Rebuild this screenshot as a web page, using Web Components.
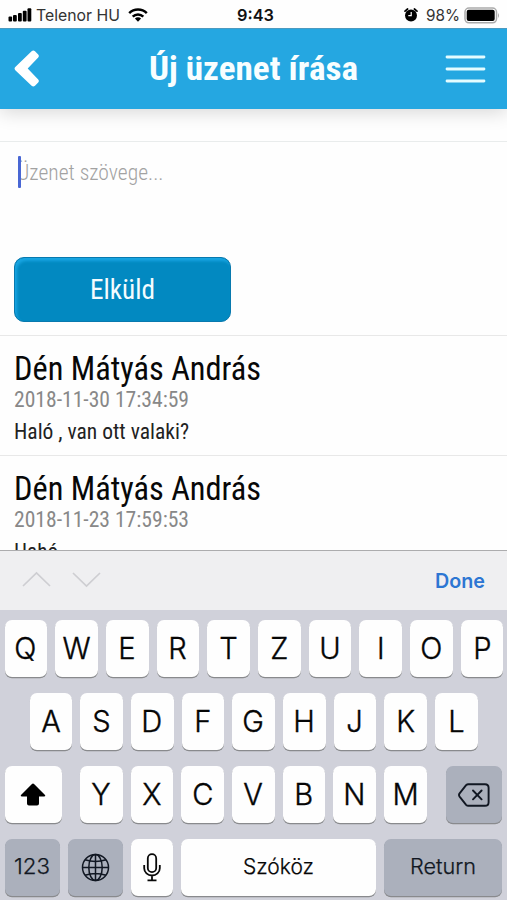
<!DOCTYPE html>
<html lang="hu">
<head>
<meta charset="utf-8">
<title>Új üzenet írása</title>
<style>
    body {
        margin: 0;
        width: 507px;
        height: 900px;
        overflow: hidden;
        background: #fefefe;
        font-family: Inter, "Liberation Sans", sans-serif;
    }
</style>
</head>
<body>
<phone-screen></phone-screen>

<script>
    // One line of text squeezed or stretched to the given width
    class FitText extends HTMLElement {
        constructor() {
            super();
            this.attachShadow({ mode: 'open' }).innerHTML = `
                <style>
                    :host { display: block; flex: none; }
                    span { display: inline-block; vertical-align: top; white-space: nowrap; transform-origin: 0 50%; }
                </style>
                <span><slot></slot></span>`;
        }
        connectedCallback() {
            const span = this.shadowRoot.querySelector('span');
            const width = parseFloat(this.getAttribute('width'));
            this.style.width = width + 'px';
            const natural = span.getBoundingClientRect().width;
            if (natural) span.style.transform = 'scaleX(' + width / natural + ')';
        }
    }

    class StatusBar extends HTMLElement {
        constructor() {
            super();
            this.attachShadow({ mode: 'open' }).innerHTML = `
                <style>
                    :host { display: grid; grid-template-columns: 1fr auto 1fr; align-items: center; height: 28px; padding: 1px 7px 0 8px; box-sizing: border-box; background: #fefefe; color: #333; font-size: 16.5px; line-height: 28px; }
                    div { display: flex; align-items: center; }
                    .right { justify-content: flex-end; }
                    .time { font-weight: 600; color: #111; margin-left: 2px; }
                    svg { display: block; flex: none; }
                </style>
                <div>
                    <svg width="24" height="14" viewBox="0 0 24 14"><rect x="0.5" y="8.5" width="3.6" height="5" rx="1"/><rect x="5" y="7" width="3.8" height="6.5" rx="1"/><rect x="10" y="5" width="3.8" height="8.5" rx="1"/><rect x="14.8" y="2.8" width="3.8" height="10.7" rx="1"/><rect x="19.5" y="0.3" width="3.8" height="13.2" rx="1"/></svg>
                    <fit-text width="84" style="margin-left:4px">Telenor HU</fit-text>
                    <svg width="20" height="14" viewBox="0 0 20 14" style="margin-left:8px" fill="none" stroke="#000" stroke-width="2.5"><path d="M1.2 5.2a12.4 12.4 0 0 1 17.6 0"/><path d="M4.7 8.6a7.5 7.5 0 0 1 10.6 0"/><path d="M10 13.7L6.9 10.6a4.4 4.4 0 0 1 6.2 0Z" fill="#000" stroke="none"/></svg>
                </div>
                <fit-text class="time" width="37">9:43</fit-text>
                <div class="right">
                    <svg width="14" height="14" viewBox="0 0 14 14"><circle cx="7" cy="7.5" r="6"/><path d="M1 3.2L3.6 1M13 3.2L10.4 1" stroke="#000" stroke-width="1.7" stroke-linecap="round"/><path d="M7.2 4v3.7H4.3" fill="none" stroke="#fff" stroke-width="1.2"/></svg>
                    <fit-text width="34" style="margin-left:8px">98%</fit-text>
                    <svg width="36" height="17" viewBox="0 0 36 17" style="margin-left:4px"><rect x="1" y="1" width="31.5" height="14.8" rx="4" fill="#fff" stroke="#aaa" stroke-width="1.5"/><rect x="2.7" y="2.7" width="28" height="11.4" rx="2" fill="#000"/><path d="M34 6q2 2.5 0 5Z" fill="#aaa"/></svg>
                </div>`;
        }
    }

    class TitleBar extends HTMLElement {
        constructor() {
            super();
            this.attachShadow({ mode: 'open' }).innerHTML = `
                <style>
                    :host { display: flex; justify-content: space-between; align-items: center; height: 80.5px; box-sizing: border-box; padding: 0 21px 0 14px; background: #25a7e1; border-top: 1px solid #4c9ac0; box-shadow: 0 3px 18px rgba(0,0,0,.16); color: #f8feff; font: bold 33.5px/80px "Roboto Condensed", Roboto, sans-serif; }
                    svg { display: block; }
                </style>
                <svg width="26" height="38" viewBox="0 0 26 38"><path d="M17.6 1.2q1.7-1.6 3.4 0l3.2 3.2q1.3 1.6 0 3.1L13.7 18.5l10.5 11q1.3 1.5 0 3.1L21 35.8q-1.7 1.6-3.4 0L1.3 20.2q-1.5-1.6 0-3.3Z" fill="#fff"/></svg>
                <fit-text width="209" style="margin-left:22px"><slot></slot></fit-text>
                <svg width="41" height="30" viewBox="0 0 41 30" stroke="#e4fcff" stroke-width="2.8" stroke-linecap="round"><path d="M2 3h37M2 15h37M2 27h37"/></svg>`;
        }
    }

    class MessageForm extends HTMLElement {
        constructor() {
            super();
            this.attachShadow({ mode: 'open' }).innerHTML = `
                <style>
                    :host { display: flex; flex-direction: column; align-items: flex-start; height: 227px; box-sizing: border-box; padding: 32.5px 14px 0; border-bottom: 1px solid #e8e8e8; font-family: "Roboto Condensed", Roboto, sans-serif; }
                    .rule { align-self: stretch; margin: 0 -14px; height: 1px; background: #e9ecec; }
                    .field { display: flex; align-items: center; height: 32px; margin: 14px 0 69px 4px; color: #a2a2a2; font-size: 22.5px; line-height: 30px; font-weight: 300; }
                    .caret { width: 3px; height: 32px; border-radius: 1px; background: #4967d4; z-index: 1; }
                    .send { display: flex; justify-content: center; align-items: center; width: 216.5px; height: 65px; box-sizing: border-box; border: 1px solid #0879ae; border-radius: 10px; padding: 0; background: #0289c1; box-shadow: inset 2px 3px 3px #18a5e2; color: #f4fcff; font: 27.5px/63px "Roboto Condensed", Roboto, sans-serif; }
                </style>
                <div class="rule"></div>
                <div class="field"><div class="caret"></div><fit-text width="146.5" style="margin-left:-4.5px">Üzenet szövege...</fit-text></div>
                <button class="send"><fit-text width="65">Elküld</fit-text></button>`;
        }
    }

    class MessageItem extends HTMLElement {
        constructor() {
            super();
            this.attachShadow({ mode: 'open' }).innerHTML = `
                <style>
                    :host { display: block; height: 120.5px; box-sizing: border-box; padding: 14px 14px 0; border-bottom: 1px solid #e8e8e8; font-family: "Roboto Condensed", Roboto, sans-serif; }
                    .name { font-size: 33.5px; line-height: 38px; color: #080808; }
                    .date { font-size: 22px; line-height: 24px; color: #888; }
                    .text { font-size: 22px; line-height: 26px; margin-top: 7px; color: #222; }
                </style>
                <fit-text class="name" width="247"></fit-text>
                <fit-text class="date" width="175"></fit-text>
                <fit-text class="text"></fit-text>`;
            this.shadowRoot.querySelector('.name').textContent = this.getAttribute('name');
            this.shadowRoot.querySelector('.date').textContent = this.getAttribute('date');
            const text = this.shadowRoot.querySelector('.text');
            text.textContent = this.getAttribute('text');
            text.setAttribute('width', this.getAttribute('text-width'));
        }
    }

    class InputAccessory extends HTMLElement {
        constructor() {
            super();
            this.attachShadow({ mode: 'open' }).innerHTML = `
                <style>
                    :host { display: flex; align-items: center; justify-content: space-between; height: 60px; box-sizing: border-box; padding: 0 22px; border-top: 1.5px solid #acacae; background: #efeff1; color: #2d76d3; font-size: 20px; font-weight: 600; line-height: 58px; }
                    svg { display: block; margin-top: -2px; }
                </style>
                <svg width="80" height="18" viewBox="0 0 80 18" fill="none" stroke="#ceced2" stroke-width="1.7"><path d="M1 15L14.5 2 28 15M51 2L64.5 15 78 2"/></svg>
                <fit-text width="50">Done</fit-text>`;
        }
    }

    class KeyCap extends HTMLElement {
        constructor() {
            super();
            this.attachShadow({ mode: 'open' }).innerHTML = `
                <style>
                    :host { display: flex; flex: none; align-items: center; justify-content: center; width: 42.7px; height: 57px; border-radius: 7px; background: #fefefe; box-shadow: 0 1.3px 0 #898a8d; color: #050505; font-size: 30px; font-weight: 300; line-height: 57px; }
                    :host([dark]) { background: #abb0bc; color: #111722; }
                    :host([word]) { font-size: 21.5px; line-height: 53px; margin-bottom: 0; -webkit-text-stroke: .25px; }
                    :host([letter]) span { transform: scaleX(.97); -webkit-text-stroke: .4px; }
                    ::slotted(fit-text) { margin-bottom: 2px; }
                    ::slotted(svg) { display: block; }
                </style>
                <span><slot></slot></span>`;
        }
    }

    class OnscreenKeyboard extends HTMLElement {
        constructor() {
            super();
            const keys = letters => [...letters].map(l => `<key-cap letter>${l}</key-cap>`).join('');
            this.attachShadow({ mode: 'open' }).innerHTML = `
                <style>
                    :host { display: flex; flex-direction: column; gap: 16px; height: 290px; box-sizing: border-box; padding: 10px 4.5px 0; background: #d0d1da; }
                    .row { display: flex; gap: 8px; }
                    .home { padding-left: 25px; }
                </style>
                <div class="row">${keys('QWERTZUIOP')}</div>
                <div class="row home">${keys('ASDFGHJKL')}</div>
                <div class="row">
                    <key-cap style="width:57px;margin-right:10.5px"><svg width="26" height="23" viewBox="0 0 26 23"><path d="M13 0.5Q13.6 .5 14.3 1.3L25 12q1 1.3-.8 1.5H19v7q0 2-2 2H9q-2 0-2-2v-7H1.8Q0 13.3 1 12L11.7 1.3Q12.4.5 13 .5Z"/></svg></key-cap>
                    ${keys('YXCVBNM')}
                    <key-cap dark style="width:56px;margin-left:11.5px"><svg width="32" height="24" viewBox="0 0 32 24" fill="none" stroke="#111722" stroke-width="1.9" stroke-linejoin="round" stroke-linecap="round"><path d="M10.3 1.2H27q3.6 0 3.6 3.6v14.4q0 3.6-3.6 3.6H10.3q-1.2 0-2.2-1L1.6 13.6q-1.2-1.6 0-3.2L8.1 2.2q1-1 2.2-1Z"/><path d="M15 7.5l8.6 8.8M23.6 7.5l-8.6 8.8"/></svg></key-cap>
                </div>
                <div class="row">
                    <key-cap dark word style="width:55px"><fit-text width="36">123</fit-text></key-cap>
                    <key-cap dark style="width:55px"><svg width="29" height="29" viewBox="0 0 29 29" fill="none" stroke="#111722" stroke-width="1.5"><circle cx="14.5" cy="14.5" r="13"/><ellipse cx="14.5" cy="14.5" rx="6.7" ry="13"/><path d="M14.5 1.5v26M1.5 14.5h26M4 6.7q10.5 3.5 21 0M4 22.3q10.5-3.5 21 0"/></svg></key-cap>
                    <key-cap><svg width="18" height="29" viewBox="0 0 18 29" fill="none" stroke="#080808" stroke-width="1.8"><rect x="4.8" y="1.2" width="8.4" height="18" rx="4.2"/><path d="M1.2 12v3.2a7.8 7.3 0 0 0 15.6 0V12M9 22.5v4.7M4.5 27.3h9"/></svg></key-cap>
                    <key-cap word style="width:195.2px"><fit-text width="71">Szóköz</fit-text></key-cap>
                    <key-cap dark word style="width:118px"><fit-text width="66">Return</fit-text></key-cap>
                </div>`;
        }
    }

    class PhoneScreen extends HTMLElement {
        constructor() {
            super();
            this.attachShadow({ mode: 'open' }).innerHTML = `
                <style>
                    :host { display: flex; flex-direction: column; width: 507px; height: 900px; overflow: hidden; }
                    main { flex: 1; min-height: 0; overflow: hidden; }
                    title-bar, status-bar, input-accessory, onscreen-keyboard { flex: none; }
                    title-bar { z-index: 1; }
                    status-bar { z-index: 2; }
                </style>
                <status-bar></status-bar>
                <title-bar>Új üzenet írása</title-bar>
                <main>
                    <message-form></message-form>
                    <message-item name="Dén Mátyás András" date="2018-11-30 17:34:59" text="Haló , van ott valaki?" text-width="175"></message-item>
                    <message-item name="Dén Mátyás András" date="2018-11-23 17:59:53" text="Hahó" text-width="44"></message-item>
                </main>
                <input-accessory></input-accessory>
                <onscreen-keyboard></onscreen-keyboard>`;
        }
    }

    customElements.define('status-bar', StatusBar);
    customElements.define('title-bar', TitleBar);
    customElements.define('message-form', MessageForm);
    customElements.define('message-item', MessageItem);
    customElements.define('input-accessory', InputAccessory);
    customElements.define('key-cap', KeyCap);
    customElements.define('onscreen-keyboard', OnscreenKeyboard);
    customElements.define('phone-screen', PhoneScreen);
    // Defined last so that every label is already in place when it is measured
    customElements.define('fit-text', FitText);
</script>
</body>
</html>
